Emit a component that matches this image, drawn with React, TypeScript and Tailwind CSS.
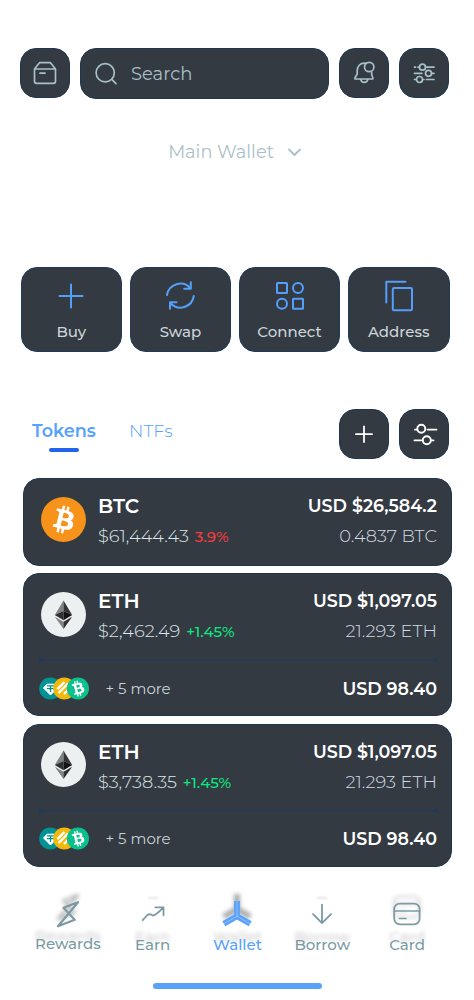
import type { ReactNode } from 'react';
import clsx from 'clsx';

const BTC_PATH =
  'M23.189 14.02c.314-2.096-1.283-3.223-3.465-3.975l.708-2.84-1.728-.43-.69 2.765c-.454-.114-.92-.22-1.385-.326l.695-2.783L15.596 6l-.708 2.839c-.376-.086-.746-.17-1.104-.26l.002-.009-2.384-.595-.46 1.846s1.283.294 1.256.312c.7.175.826.638.805 1.006l-.806 3.235c.048.012.11.03.18.057l-.183-.045-1.13 4.532c-.086.212-.303.531-.793.41.018.025-1.256-.313-1.256-.313l-.858 1.978 2.25.561c.418.105.828.215 1.231.318l-.715 2.872 1.727.43.708-2.84c.472.127.93.245 1.378.357l-.706 2.828 1.728.43.715-2.866c2.948.558 5.164.333 6.097-2.333.752-2.146-.037-3.385-1.588-4.192 1.13-.26 1.98-1.003 2.207-2.538zm-3.95 5.538c-.533 2.147-4.148.986-5.32.695l.95-3.805c1.172.293 4.929.872 4.37 3.11zm.535-5.569c-.487 1.953-3.495.96-4.47.717l.86-3.45c.975.243 4.118.696 3.61 2.733z';

interface IconProps {
  size?: number;
  stroke?: number;
  className?: string;
  children: ReactNode;
}

const Icon = ({ size = 28, stroke = 1.7, className, children }: IconProps) => (
  <svg
    width={size}
    height={size}
    viewBox={`0 0 ${size} ${size}`}
    fill="none"
    stroke="currentColor"
    strokeWidth={stroke}
    strokeLinecap="round"
    strokeLinejoin="round"
    className={clsx('shrink-0 overflow-visible', className)}
  >
    {children}
  </svg>
);

const SquareButton = ({ children }: { children: ReactNode }) => (
  <button type="button" className="flex h-[50px] w-[50px] shrink-0 items-center justify-center rounded-[16px] border border-[#1f3650] bg-[#333a42]">
    {children}
  </button>
);

const BtcLogo = () => (
  <svg width="45" height="45" viewBox="0 0 32 32" className="shrink-0">
    <circle cx="16" cy="16" r="16" fill="#f7931a" />
    <path d={BTC_PATH} fill="#fff" />
  </svg>
);

const EthLogo = () => (
  <svg width="45" height="45" viewBox="0 0 45 45" className="shrink-0">
    <circle cx="22.5" cy="22.5" r="22.5" fill="#ecf0f1" />
    <path d="M22.5 8.5 L13.8 23 L22.5 19Z" fill="#828384" />
    <path d="M22.5 8.5 L31.2 23 L22.5 19Z" fill="#343535" />
    <path d="M13.8 23 L22.5 19 V28.2Z" fill="#2f3030" />
    <path d="M31.2 23 L22.5 19 V28.2Z" fill="#131313" />
    <path d="M13.8 24.7 L22.5 29.8 V37Z" fill="#828384" />
    <path d="M31.2 24.7 L22.5 29.8 V37Z" fill="#2f3030" />
  </svg>
);

const MiniCoins = () => (
  <svg width="51" height="23" viewBox="0 0 51 23" className="shrink-0">
    <circle cx="11.3" cy="11.5" r="11.1" fill="#009393" />
    <path d="M8 7.2 H15 L18.5 11 L11.5 18 L4.5 11Z" fill="#fff" stroke="#fff" strokeLinejoin="round" />
    <path d="M8 8.9 H15 M11.5 9 V15 M7.8 11.6 H15.2" stroke="#009393" strokeWidth="1.3" />
    <circle cx="25.3" cy="11.5" r="11.1" fill="#f0b90b" />
    <path d="M18.3 12.2 L25.5 5 M19.5 16 L29 6.5 M25 17 L30 12" stroke="#fff" strokeWidth="2.4" />
    <circle cx="38.9" cy="11.5" r="11.1" fill="#0ac18e" />
    <g transform="translate(38.9 11.5) rotate(-28) scale(.8) translate(-16 -16)">
      <path d={BTC_PATH} fill="#fff" />
    </g>
  </svg>
);

const actions = [
  {
    label: 'Buy',
    icon: <path d="M17 5.5 V28.5 M5.5 17 H28.5" />,
  },
  {
    label: 'Swap',
    icon: (
      <path d="M4 16 A13.5 13.5 0 0 1 27.5 9.3 M27.8 3.2 V9.7 H21.2 M30.8 17 A13.5 13.5 0 0 1 7.5 24.2 M7 29.8 V23.2 H13.5" />
    ),
  },
  {
    label: 'Connect',
    icon: (
      <>
        <rect x="4" y="4" width="10" height="10" rx="0.5" />
        <circle cx="25" cy="9" r="5" />
        <circle cx="9" cy="24.7" r="5" />
        <rect x="20" y="19.7" width="10" height="10" rx="0.5" />
      </>
    ),
  },
  {
    label: 'Address',
    icon: (
      <>
        <path d="M4.3 23.5 V2.8 H23.5" />
        <rect x="10.8" y="9" width="19.2" height="22.2" rx="1.2" />
      </>
    ),
  },
];

interface Token {
  symbol: string;
  price: string;
  change: string;
  up: boolean;
  usd: string;
  amount: string;
  more?: boolean;
}

const tokens: Token[] = [
  { symbol: 'BTC', price: '$61,444.43', change: '3.9%', up: false, usd: 'USD $26,584.2', amount: '0.4837 BTC' },
  { symbol: 'ETH', price: '$2,462.49', change: '+1.45%', up: true, usd: 'USD $1,097.05', amount: '21.293 ETH', more: true },
  { symbol: 'ETH', price: '$3,738.35', change: '+1.45%', up: true, usd: 'USD $1,097.05', amount: '21.293 ETH', more: true },
];

const TokenCard = ({ token }: { token: Token }) => (
  <div className={clsx('rounded-[16px] border border-[#1f3650] bg-[#333a42] pr-[14px] pl-[16.5px]', token.more ? 'h-[143px]' : 'h-[87.5px]')}>
    <div className="flex h-[86px] items-start">
      <div className="mt-[17.5px]">{token.symbol === 'BTC' ? <BtcLogo /> : <EthLogo />}</div>
      <div className="mt-[12px] ml-[12.5px] flex-1">
        <div className="text-[20px] leading-[30px] font-semibold text-white">{token.symbol}</div>
        <div className="flex items-baseline gap-[6px] leading-[30px]">
          <span className="text-[17.8px] font-light text-[#dfe6ea]">{token.price}</span>
          <span className={clsx('text-[15px] font-medium', token.up ? 'text-[#0be881]' : 'text-[#f53b3b]')}>{token.change}</span>
        </div>
      </div>
      <div className="mt-[12px] text-right leading-[30px]">
        <div className="text-[17.5px] font-semibold text-white">{token.usd}</div>
        <div className="text-[17.8px] font-light text-[#d3dce2]">{token.amount}</div>
      </div>
    </div>
    {token.more && (
      <>
        <svg width="399" height="6" viewBox="0 0 399 6" className="-mt-[3px] -ml-[2px]" fill="#203a5c">
          <path d="M0 0 L5 3 L0 6Z M399 0 L394 3 L399 6Z" />
          <rect x="2" y="2.4" width="395" height="1.2" />
        </svg>
        <div className="mt-[13.5px] -ml-[1.5px] flex items-center">
          <MiniCoins />
          <span className="ml-[15.5px] text-[15px] leading-[23px] text-[#c9d2d8]">+ 5 more</span>
          <span className="ml-auto text-[17.5px] leading-[23px] font-semibold text-white">USD 98.40</span>
        </div>
      </>
    )}
  </div>
);

const navItems = [
  {
    label: 'Rewards',
    active: false,
    shadow: 'drop-shadow-[0_-7px_2px_rgba(0,0,0,0.35)]',
    offset: 'mt-[1px]',
    icon: <path d="M27 4.2 L12.5 9.8 L23.7 21.7 L7 28.2 Z" strokeWidth="2.3" />,
  },
  {
    label: 'Earn',
    active: false,
    shadow: '',
    offset: 'mt-[2px]',
    icon: <path d="M6.7 22.2 L11.4 17 Q14 15.3 17 17.6 Q20 17 27.3 9.6 M19.3 9.3 H27.5 V17.3" strokeWidth="1.8" />,
  },
  {
    label: 'Wallet',
    active: true,
    shadow: 'drop-shadow-[0_-7px_2px_rgba(0,0,0,0.35)]',
    offset: 'mt-[2px]',
    icon: (
      <>
        <path d="M17 3 V18.2 M17 18.2 L3.8 25.8 M17 18.2 L30.2 25.8" strokeWidth="5.8" strokeLinecap="butt" />
        <path d="M17 3.5 V18.2 M17 18.2 L4.2 25.6 M17 18.2 L29.8 25.6" stroke="#b3d5ff" strokeWidth="0.6" />
      </>
    ),
  },
  {
    label: 'Borrow',
    active: false,
    shadow: '',
    offset: 'mt-[2px]',
    icon: <path d="M17 6.7 V25 M8 16.2 L17 25.2 L26 16.2" strokeWidth="1.8" />,
  },
  {
    label: 'Card',
    active: false,
    shadow: 'drop-shadow-[0_-7px_2px_rgba(0,0,0,0.2)]',
    offset: 'mt-[2px]',
    icon: (
      <>
        <rect x="4.2" y="5.6" width="25.4" height="20.7" rx="5.5" strokeWidth="1.8" />
        <path d="M4.5 13 H29.5 M9.5 20.5 H16" strokeWidth="1.7" />
      </>
    ),
  },
];

const App: React.FC = () => {
  return (
    <div className="flex h-[1000px] w-[474px] flex-col overflow-hidden bg-white font-['Montserrat','Inter',sans-serif] whitespace-nowrap">
      <header className="mt-[48px] ml-[20.4px] flex h-[51px] gap-[10px] text-[#a9bfc7]">
        <SquareButton>
          <Icon>
            <path d="M3.5 10 H24.5 V22.3 Q24.5 24.3 22.5 24.3 H5.5 Q3.5 24.3 3.5 22.3 Z M3.5 10 L8.5 3.7 H19.5 L24.5 10 M9 14.2 H14" />
          </Icon>
        </SquareButton>
        <div className="flex h-[51px] w-[249px] items-center rounded-[16px] border border-[#1f3650] bg-[#333a42] pl-[10.5px]">
          <Icon>
            <circle cx="13.2" cy="12.8" r="9.1" />
            <path d="M19.7 19.3 L24 23.6" />
          </Icon>
          <span className="ml-[11px] text-[18px] leading-6">Search</span>
        </div>
        <SquareButton>
          <Icon>
            <path d="M16.5 4.4 C9.5 3.2 7.2 8 7.2 12 V15 L5 18.7 V20 H22.8 V18.5 L21.7 16 V13.5 M10.7 20.3 A3.6 3.6 0 0 0 17.8 20.3" />
            <circle cx="19.2" cy="8" r="4.7" />
          </Icon>
        </SquareButton>
        <SquareButton>
          <Icon>
            <path d="M4.5 8.2 H5.5 M8 8.2 H9 M16 8.2 H24 M4.5 14.3 H12 M21.5 14.3 H24 M4.5 20.5 H6 M13 20.5 H14 M16.5 20.5 H24" />
            <circle cx="12.5" cy="8.2" r="3" />
            <circle cx="18.5" cy="14.3" r="3" />
            <circle cx="9.5" cy="20.5" r="3" />
          </Icon>
        </SquareButton>
      </header>

      <div className="mt-[41px] flex h-6 items-center justify-center gap-[14px] pr-[5px] text-[#abbfc8]">
        <span className="text-[17.8px] leading-6">Main Wallet</span>
        <Icon size={13} stroke={1.8}>
          <path d="M1 3.5 L6.5 9 L12 3.5" />
        </Icon>
      </div>

      <div className="mt-[103px] ml-[20.5px] grid h-[85px] w-[429px] grid-cols-4 gap-[7.5px]">
        {actions.map((action) => (
          <button key={action.label} type="button" className="flex flex-col items-center rounded-[16px] border border-[#1f3a5c] bg-[#333a42] pt-[11px]">
            <Icon size={34} stroke={2} className="text-[#549ffa]">
              {action.icon}
            </Icon>
            <span className="mt-[8px] text-[15px] leading-[22px] font-medium text-[#ccd5db]">{action.label}</span>
          </button>
        ))}
      </div>

      <div className="mt-[57px] ml-[32px] flex h-[51px] w-[417px] items-start text-[#58a2fb]">
        <div className="flex w-[64px] flex-col items-center pt-[10px]">
          <span className="text-[17.6px] leading-6 font-semibold">Tokens</span>
          <span className="mt-[5px] h-[4px] w-[30px] rounded-full bg-[#2463eb]" />
        </div>
        <span className="mt-[10px] ml-[33px] text-[17.7px] leading-6 font-light">NTFs</span>
        <div className="ml-auto flex gap-[10px] text-white">
          <SquareButton>
            <Icon stroke={1.8}>
              <path d="M14 6.3 V22 M6 14.2 H22" />
            </Icon>
          </SquareButton>
          <SquareButton>
            <Icon stroke={1.9}>
              <path d="M5 9.6 H7 M17.5 9.6 H26.5 M4.5 20.4 H12.5 M21 20.4 H23.5" />
              <circle cx="11.3" cy="8.8" r="4" />
              <circle cx="16.8" cy="20.2" r="4" />
            </Icon>
          </SquareButton>
        </div>
      </div>

      <main className="mt-[18px] ml-[23px] flex w-[429px] flex-col gap-[7.5px]">
        {tokens.map((token, index) => (
          <TokenCard key={index} token={token} />
        ))}
      </main>

      <nav className="mt-[31px] ml-[25.5px] grid w-[424px] grid-cols-5">
        {navItems.map((item) => (
          <div key={item.label} className={clsx('relative flex flex-col items-center', item.active ? 'text-[#58a2fb]' : 'text-[#7b9aa3]')}>
            {!item.shadow && <span className="absolute -top-px h-[2px] w-[10px] bg-black/10 blur-[1px]" />}
            <Icon size={34} className={item.shadow}>
              {item.icon}
            </Icon>
            <span className={clsx('text-[15px] leading-[22px] font-medium [text-shadow:0_-8px_4px_rgba(0,0,0,0.2)]', item.offset)}>
              {item.label}
            </span>
          </div>
        ))}
      </nav>

      <div className="mt-[27px] ml-[153px] h-[6px] w-[169px] rounded-full bg-[#58a2fb]" />
    </div>
  );
};

export default App;
